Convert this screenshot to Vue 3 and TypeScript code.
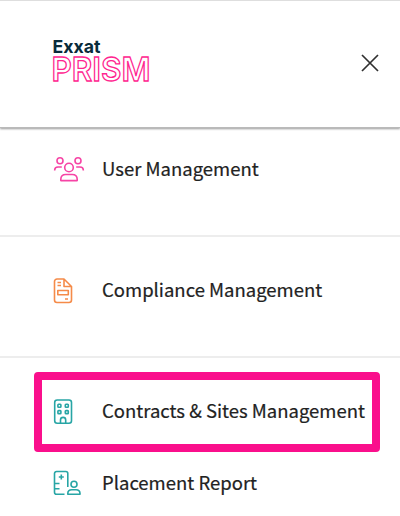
<script setup lang="ts">
type IconName = 'users' | 'document' | 'building' | 'report'
interface MenuItem {
  label: string
  icon: IconName
  variant: string
}
const items: MenuItem[] = [
  { label: 'User Management', icon: 'users', variant: 'first' },
  { label: 'Compliance Management', icon: 'document', variant: 'second' },
  { label: 'Contracts & Sites Management', icon: 'building', variant: 'selected' },
  { label: 'Placement Report', icon: 'report', variant: 'last' },
]
</script>

<template>
  <div class="panel">
    <header class="header">
      <svg class="logo" width="106" height="56" viewBox="-2 -2 106 56" role="img" aria-label="Exxat Prism">
        <text class="brand" x="-0.500" y="17" textLength="48" lengthAdjust="spacingAndGlyphs">Exxat</text>
        <text class="product" x="-1.500" y="45.200" textLength="99" lengthAdjust="spacingAndGlyphs">PRISM</text>
      </svg>
      <button class="close" aria-label="Close">
        <svg width="18" height="18" viewBox="0 0 18 18"><path d="M1 1L17 17M17 1L1 17" /></svg>
      </button>
    </header>
    <nav>
      <a v-for="item in items" :key="item.label" class="item" :class="item.variant">
        <svg v-if="item.icon === 'users'" class="icon pink" width="32" height="28" viewBox="0 0 32 28">
          <circle cx="7" cy="4.800" r="3" /><circle cx="25" cy="4.800" r="3" />
          <circle cx="16" cy="11.500" r="4.300" />
          <path d="M1.700 14.500v-.5c0-2 1.500-3 3.300-3h3.800M30.300 14.500v-.5c0-2-1.500-3-3.300-3h-3.800" />
          <path d="M7.800 24.600v-1.300c0-3 2-4.800 5-4.800h6.400c3 0 5 1.800 5 4.800v1.300z" />
        </svg>
        <svg v-else-if="item.icon === 'document'" class="icon orange" width="32" height="28" viewBox="0 0 32 28">
          <path d="M11 2H4a2.500 2.500 0 0 0-2.500 2.500v18.500A2.500 2.500 0 0 0 4 25.500h12a2.500 2.500 0 0 0 2.500-2.500V9.500L11 2v7.500h7.500M4.500 5.500h3.500M4.500 8.500h3.500M12 22h3" />
          <rect x="4.800" y="13.500" width="10.500" height="4.300" />
        </svg>
        <svg v-else-if="item.icon === 'building'" class="icon teal" width="32" height="28" viewBox="0 0 32 28">
          <rect x="1.700" y="2" width="16.800" height="23.200" rx="2.500" />
          <rect x="4.900" y="6.200" width="3" height="3" rx=".7" /><rect x="12.300" y="6.200" width="3" height="3" rx=".7" />
          <rect x="4.900" y="12.600" width="3" height="3" rx=".7" /><rect x="12.300" y="12.600" width="3" height="3" rx=".7" />
          <path d="M7.500 25v-3a2.600 2.600 0 0 1 5.200 0v3" />
        </svg>
        <svg v-else class="icon teal" width="32" height="28" viewBox="0 0 32 28">
          <path d="M11.500 25.300h-8a2 2 0 0 1-2-2V4.500a2 2 0 0 1 2-2h9.300a2 2 0 0 1 2 2V18M1.500 14.500h5M1.500 19.700h5M8.300 5.500v5M5.800 8h5" />
          <circle cx="21" cy="15.200" r="3" />
          <path d="M14.800 25.300v-.8c0-2.500 1.700-3.800 4-3.800h4.200c2.300 0 4 1.300 4 3.800v.8z" />
        </svg>
        <span class="label">{{ item.label }}</span>
      </a>
    </nav>
  </div>
</template>

<style>
body {
  background: #fff;
}
</style>

<style scoped>
.panel {
  width: 400px;
  height: 516px;
  box-sizing: border-box;
  overflow: hidden;
  background: #fff;
  font-family: "Noto Sans CJK SC", "Noto Sans", sans-serif;
}
.header {
  box-sizing: border-box;
  height: 128px;
  padding: 0 20px 0 51px;
  display: flex;
  align-items: center;
  justify-content: space-between;
  border-top: 1px solid #dedede;
  border-bottom: 1px solid #bababa;
  box-shadow: 0 1px 2px #999;
}
.logo {
  display: block;
  margin-bottom: 5px;
}
.brand {
  font: 650 18px Inter, sans-serif;
  fill: #082b3b;
}
.product {
  font: 600 33px Inter, sans-serif;
  fill: #fff;
  stroke: #ff258f;
  stroke-width: 1.300;
}
.close {
  display: flex;
  border: 0;
  background: none;
  padding: 0 1px 2px 0;
}
.close path {
  fill: none;
  stroke: #303030;
  stroke-width: 1.700;
}
.item {
  box-sizing: border-box;
  display: flex;
  align-items: center;
  gap: 17px;
  padding-left: 53px;
  color: #222;
}
.first {
  height: 109px;
  padding-bottom: 23px;
  border-bottom: 2px solid #ededed;
}
.second {
  height: 121px;
  padding-bottom: 11px;
  border-bottom: 2px solid #ededed;
}
.selected {
  height: 80px;
  margin: 14px 20px 0 34px;
  padding-left: 11px;
  border: 8px solid #fa0f8c;
  border-radius: 4px;
}
.last {
  height: 64px;
}
.last .icon {
  margin-bottom: 2px;
}
.icon {
  display: block;
  flex: none;
  fill: none;
  stroke-width: 1.600;
  stroke-linejoin: round;
}
.pink {
  stroke: #f644a5;
}
.orange {
  stroke: #f58b49;
}
.teal {
  stroke: #27a5a5;
}
.label {
  margin-bottom: 4px;
  font-size: 18.500px;
  line-height: 28px;
  white-space: nowrap;
  -webkit-text-stroke: 0.200px #222;
}
</style>
